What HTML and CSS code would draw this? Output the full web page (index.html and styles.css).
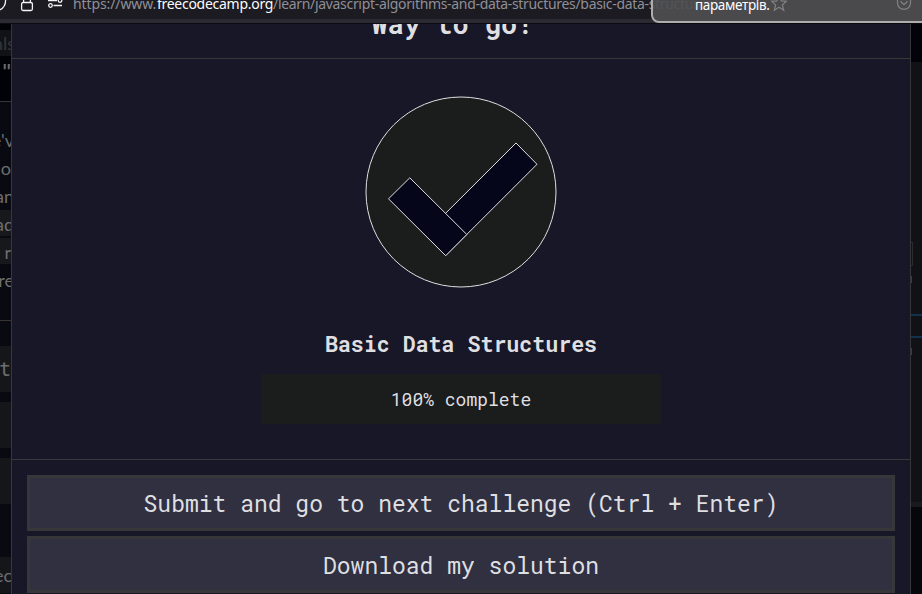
FILE: index.html
```html
<!DOCTYPE html>
<html lang="en">
<head>
<meta charset="utf-8">
<title>Basic Data Structures</title>
<link rel="stylesheet" href="styles.css">
</head>
<body>
<header class="toolbar">
  <svg class="tools" width="73" height="20" viewBox="0 0 73 20" fill="none" stroke="#f4f4f6" stroke-width="1.3">
    <path d="M5.6 0C5.6 5 3.5 8.500 -1 10.300"/>
    <rect x="21.600" y="2.500" width="10.800" height="8" rx="1.500"/>
    <path d="M23.600 2.500V-1M30.400 2.500V-1"/>
    <path d="M48 .7H57M53.500 5.500H62"/>
    <circle cx="60" cy=".5" r="1.800"/><circle cx="50.500" cy="5.500" r="1.800"/>
  </svg>
  <div class="url"><span class="scheme">https://www.</span><span class="host">freecodecamp.org</span><span class="path">/learn/javascript-algorithms-and-data-structures/basic-data-structures/</span></div>
  <div class="tip">
    <span>параметрів.</span>
    <svg width="270" height="21" viewBox="652 0 270 21" fill="none" stroke="#828285" stroke-width="1.200">
      <path d="M779 -4.500L781.200 .9L786.300 1.300L782.400 4.900L783.700 10.300L779 7.300L774.300 10.300L775.600 4.900L771.700 1.300L776.800 .9Z"/>
      <path d="M897.500 -1V3C897.500 11.500 910.500 11.500 910.500 3V-1M900.500 1.300L904 4.700L907.500 1.300"/>
    </svg>
  </div>
</header>
<main class="stage">
  <aside class="left">
    <div class="tab">als</div>
    <div class="heading">"</div>
    <div class="copy">
      <p>e'v</p><p class="in">lo</p><p>an</p><p class="code">ad</p><p class="code in">r</p><p>re</p>
    </div>
    <div class="box mono">t</div>
    <div class="box"></div>
    <div class="box"></div>
    <div class="box last">ec</div>
  </aside>
  <section class="modal">
    <h2 class="title"><span>Way to go!</span></h2>
    <div class="body">
      <svg class="check" width="192" height="192" viewBox="365 96 192 192" stroke="#dfdfe2" stroke-width="1">
        <circle cx="461" cy="192" r="95" fill="#1b1c1c"/>
        <path d="M516 143L537 164.300L445.700 255.500L424.700 234.200Z" fill="#050619"/>
        <path d="M409.800 177.800L466.800 234.500L445.700 255.700L388.500 198.800Z" fill="#050619"/>
      </svg>
      <h3>Basic Data Structures</h3>
      <div class="progress">100% complete</div>
    </div>
    <footer>
      <button>Submit and go to next challenge (Ctrl + Enter)</button>
      <button class="download">Download my solution</button>
    </footer>
  </section>
  <aside class="right">
    <div class="top"></div>
    <div class="editor">
      <i class="bracket"></i><i class="mark"></i>
      <i class="line"></i>
      <i class="mark second"></i>
    </div>
    <div class="split"></div>
  </aside>
</main>
</body>
</html>
```
FILE: styles.css
```css
* { box-sizing: border-box; }
body { margin: 0; width: 922px; height: 594px; overflow: hidden; background: #08090f; display: flex; flex-direction: column; }
.toolbar { position: relative; display: flex; height: 24px; flex: none; overflow: hidden; background: #1c1b22; border-bottom: 1px solid #0c0b12; box-shadow: inset 0 -4px #2b2a33; }
.tools { flex: none; }
.url { font: 14px/20px "Noto Sans", sans-serif; color: #8f8f96; white-space: nowrap; margin-top: -6px; display: flex; }
.url span { flex: none; }
.scheme { width: 84px; letter-spacing: -.1px; }
.host { width: 116px; color: #fbfbfe; letter-spacing: -.28px; }
.path { letter-spacing: -.32px; }
.tip { position: absolute; left: 651px; top: -20px; width: 290px; height: 43px; border: 2px solid #adadad; border-radius: 8px; background: rgba(78,78,80,.92); color: #fff; font: 13.500px/20px "Noto Sans", sans-serif; }
.tip span { position: absolute; left: 42px; top: 13px; letter-spacing: -.35px; }
.tip svg { position: absolute; left: -1px; top: 18px; }
.stage { flex: 1; min-height: 0; display: grid; grid-template-columns: 11px 900px 11px; overflow: hidden; }
.left { padding-top: 6px; overflow: hidden; background: linear-gradient(#010108 77px, #090a11 78px); color: #6d6d70; font: 18px/28px Lato, sans-serif; display: flex; flex-direction: column; }
.left > * { display: flex; justify-content: flex-end; flex: none; }
.tab { height: 26px; background: #111216; color: #343538; line-height: 27px; margin-right: -4px; }
.heading { height: 46px; border-bottom: 1px solid #36363a; font: 700 20px/30px "Roboto Mono", monospace; margin-right: -2px; }
.left .copy { flex-direction: column; justify-content: flex-start; height: 219px; padding-top: 24px; border-bottom: 1px solid #39342f; margin-bottom: 25px; }
.copy p { margin: 0 -3px 0 0; height: 28px; display: flex; justify-content: flex-end; }
.copy .in { padding-right: 3px; }
.copy .code { height: 26px; margin-bottom: 2px; background: #17181c; }
.box { height: 46px; margin-bottom: 10px; background: #14161a; line-height: 46px; }
.left .mono { font: 20px/44px "Roboto Mono", "Liberation Mono", monospace; }
.left .last { height: 36px; margin: 43px -1px 0 0; line-height: 37px; }
.modal { border: solid #37373a; border-width: 0 1px; background: #181727; color: #dfdfe2; font-family: "Roboto Mono", "DejaVu Sans Mono", monospace; overflow: hidden; }
.title { margin: 0; height: 35px; border-bottom: 1px solid #37373a; overflow: hidden; padding-right: 17px; text-align: center; font-size: 27px; line-height: 36px; }
.title span { display: block; margin-top: -18px; }
.body { height: 401px; padding-top: 37px; border-bottom: 1px solid #37373a; display: flex; flex-direction: column; align-items: center; }
.check { display: block; }
h3 { margin: 41px 0 0; font-size: 21.600px; line-height: 30px; }
.progress { width: 400px; height: 50px; margin-top: 15px; background: #1b1c1c; text-align: center; font-size: 18px; line-height: 51px; }
footer { padding: 15px 15px 0; display: flex; flex-direction: column; gap: 5px; }
button { height: 56px; padding: 0; flex: none; border: 3px solid #37373a; border-radius: 0; background: #303040; color: #dfdfe2; font: 23px/50px "Roboto Mono", "DejaVu Sans Mono", monospace; }
.download { height: 57px; }
.right { background: #101216; overflow: hidden; display: flex; flex-direction: column; }
.top { height: 38px; background: #02020a; }
.editor { height: 440px; display: flex; flex-direction: column; }
.bracket { width: 2px; height: 24px; margin-top: 180px; border: solid #2b2c2c; border-width: 1px 1px 1px 0; }
.mark { width: 1px; height: 7px; margin-top: 10px; background: #443d22; }
.line { height: 24px; margin-top: 31px; border: solid #10324c; border-width: 2px 0; }
.second { margin-top: 10px; }
.split { height: 92px; border-top: 5px solid #191a1d; background: #06070b; }
```
